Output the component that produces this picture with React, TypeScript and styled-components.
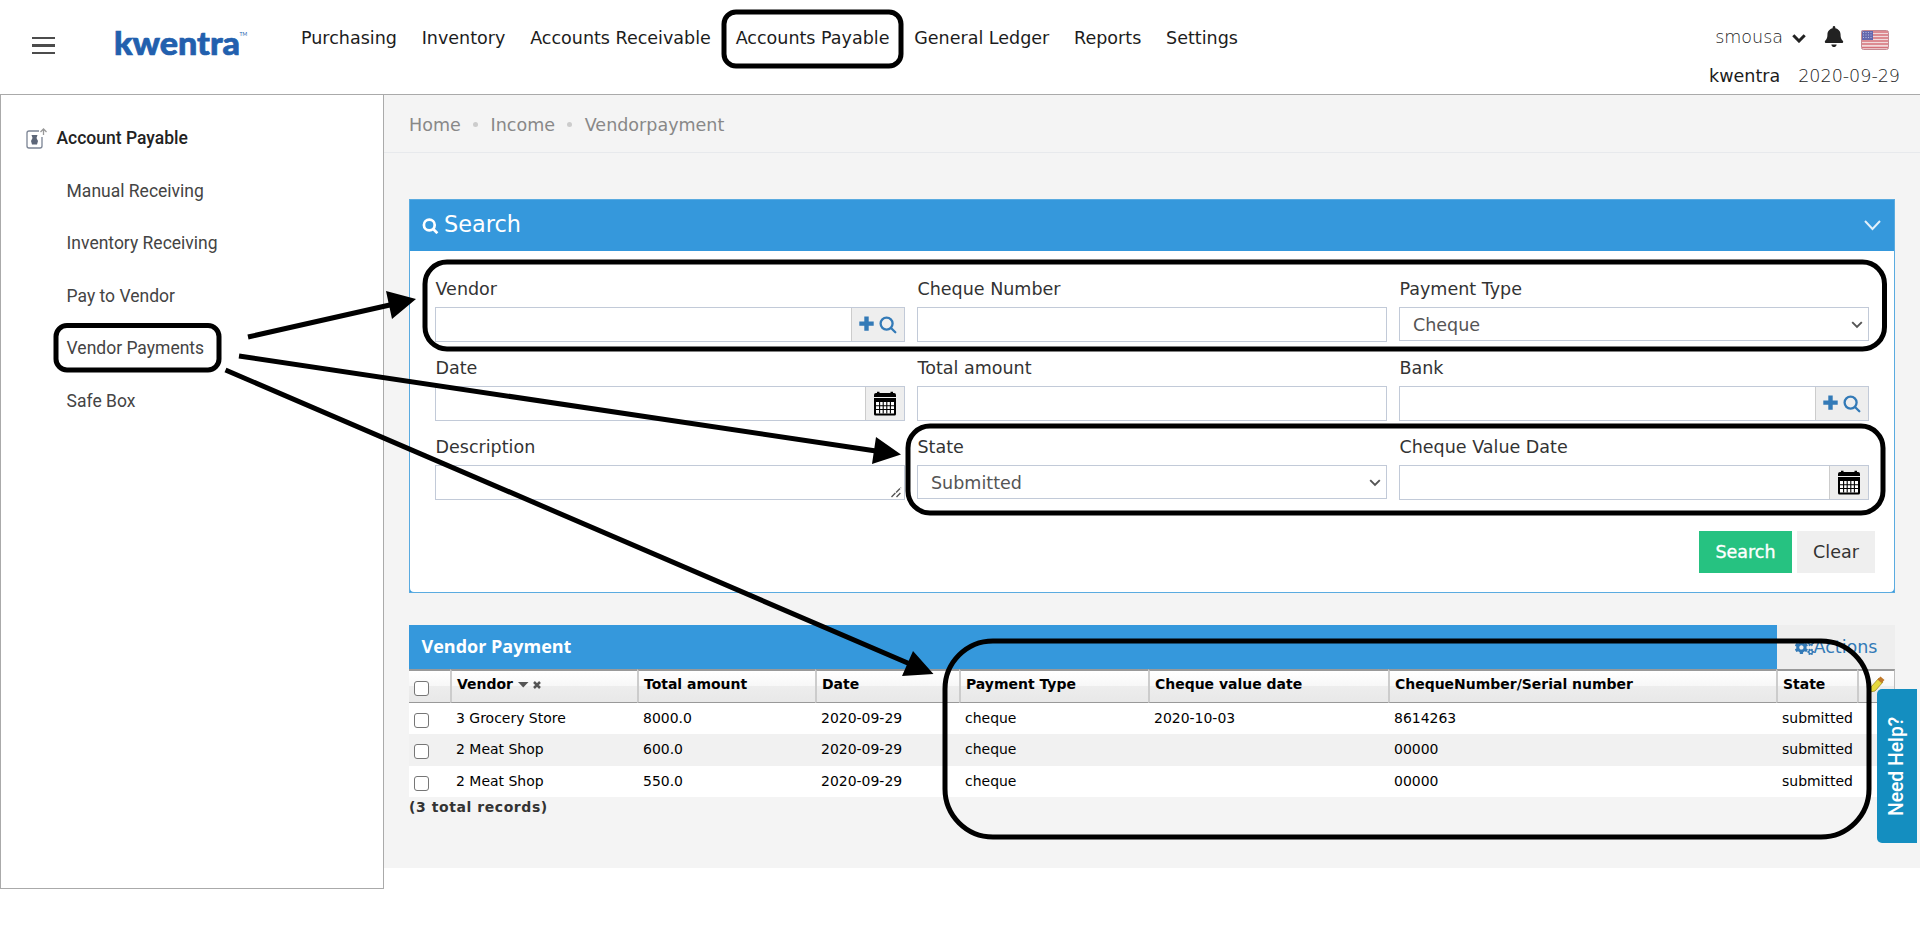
import React from "react";
import styled, { createGlobalStyle } from "styled-components";
import { FaBell, FaCogs } from "react-icons/fa";

const Global = createGlobalStyle`
  * { box-sizing: border-box; }
  body { margin: 0; background: #fff; overflow: hidden; font-family: "DejaVu Sans", Verdana, sans-serif; font-size: 17.53px; color: #333; }
`;

const Page = styled.div`
  position: relative;
  width: 1920px;
  height: 943px;
  background: #fff;
`;

const Header = styled.header`
  display: flex;
  height: 95px;
  border-bottom: 1px solid #aaa;
  color: #1c1c1c;
`;

const MenuButton = styled.div`
  display: flex;
  flex-direction: column;
  justify-content: space-between;
  width: 23px;
  height: 17px;
  margin: 37px 0 0 32px;
`;

const MenuBar = styled.span<{ $h?: number }>`
  height: ${(p) => p.$h ?? 2}px;
  background: #4c4c4c;
`;

const Logo = styled.svg`
  width: 140px;
  height: 44px;
  margin: 20px 0 0 55px;
  overflow: visible;
`;

const Nav = styled.nav`
  display: flex;
  gap: 24.8px;
  margin: 27px 0 0 51px;
  line-height: 22px;
  white-space: nowrap;
`;

const Account = styled.div`
  margin: 26px 20px 0 auto;
`;

const AccountRow = styled.div<{ $top?: number; $right?: number; $gap?: number }>`
  display: flex;
  justify-content: flex-end;
  align-items: center;
  height: 22px;
  margin: ${(p) => p.$top ?? 0}px ${(p) => p.$right ?? 0}px 0 0;
  gap: ${(p) => p.$gap ?? 0}px;
`;

const Thin = styled.span`
  font-weight: 200;
`;

const UserName = styled(Thin)`
  margin-right: 9px;
`;

const Chevron = styled.svg`
  width: 14px;
  height: 9px;
  margin: 3px 18px 0 0;
`;

const Bell = styled(FaBell)`
  width: 20px;
  height: 21px;
  margin: 0 17px 2px 0;
  color: #222;
`;

const Flag = styled.svg`
  width: 28px;
  height: 20px;
  margin-top: 5px;
`;

const Body = styled.div`
  display: flex;
  align-items: flex-start;
`;

const Sidebar = styled.aside`
  width: 384px;
  height: 794px;
  border: 1px solid #aaa;
  border-top: 0;
  padding-top: 30px;
  font-family: Roboto, sans-serif;
  font-size: 17.5px;
`;

const SideTitle = styled.div`
  display: flex;
  align-items: center;
  height: 26px;
  padding-left: 24px;
  font-weight: 500;
  color: #222;
`;

const LedgerIcon = styled.svg`
  width: 22px;
  height: 22px;
  margin-right: 9.5px;
`;

const SideList = styled.ul`
  list-style: none;
  margin: 15px 0 0;
  padding: 0 0 0 65.6px;
  color: #444;
`;

const SideItem = styled.li`
  height: 52.4px;
  line-height: 51.6px;
`;

const Main = styled.main`
  width: 1536px;
  height: 773px;
  background: #f4f4f4;
`;

const Breadcrumb = styled.div`
  display: flex;
  align-items: center;
  gap: 12.4px;
  height: 58px;
  padding: 2px 0 0 25px;
  border-bottom: 1px solid #e7e9ec;
  color: #888;
`;

const Dot = styled.span`
  width: 5px;
  height: 5px;
  border-radius: 50%;
  background: #ccc;
`;

const Panel = styled.section`
  width: 1486px;
  height: 394px;
  margin: 46px 0 0 25px;
  background: #3598dc;
  border: 1px solid #5aabe0;
`;

const PanelHead = styled.div`
  display: flex;
  align-items: center;
  height: 52px;
  margin: -1px 0 0;
  padding: 0 13px 0 12px;
  color: #fff;
  font-size: 22.4px;
`;

const PanelTitle = styled.span`
  flex: 1;
  margin-left: 5px;
  padding-bottom: 3px;
`;

const PanelBody = styled.div`
  height: 341px;
  background: #fff;
  border-radius: 0 0 4px 4px;
`;

const Form = styled.div`
  display: grid;
  grid-template-columns: repeat(3, 470px);
  grid-auto-rows: 79px;
  column-gap: 12px;
  padding: 26px 0 0 25px;
`;

const Field = styled.div`
  display: flex;
  flex-direction: column;
`;

const Label = styled.label`
  height: 30px;
  padding-left: 0.5px;
  line-height: 24px;
  color: #333;
`;

const Control = styled.div<{ $h?: number }>`
  display: flex;
  height: ${(p) => p.$h ?? 35}px;
  border: 1px solid #c2cad8;
  background: #fff;
  color: #555;
`;

const Value = styled.span`
  flex: 1;
  padding-left: 13px;
  line-height: 34px;
`;

const Addon = styled.span<{ $w: number }>`
  display: flex;
  align-items: center;
  justify-content: center;
  gap: 5px;
  width: ${(p) => p.$w}px;
  border-left: 1px solid #ccc;
  background: #eee;
  color: #337ab7;
`;

const SelectArrow = styled.svg`
  width: 12px;
  height: 8px;
  margin: 13px 5px 0 0;
`;

const Grip = styled.svg`
  width: 12px;
  height: 12px;
  margin: 20px 2px 0 auto;
`;

const Buttons = styled.div`
  display: flex;
  justify-content: flex-end;
  gap: 5px;
  margin: 17px 19px 0 0;
`;

const Button = styled.button<{ $main?: boolean }>`
  width: ${(p) => (p.$main ? 93 : 78)}px;
  height: 42px;
  padding: 0;
  border: 0;
  font: inherit;
  background: ${(p) => (p.$main ? "#26c281" : "#efefef")};
  color: ${(p) => (p.$main ? "#fff" : "#333")};
  -webkit-text-stroke: ${(p) => (p.$main ? "0.35px #fff" : "0")};
`;

const Grid = styled.section`
  width: 1486px;
  margin: 32px 0 0 25px;
`;

const GridTop = styled.div`
  display: flex;
  height: 44px;
`;

const GridTitle = styled.div`
  width: 1368px;
  padding-left: 12.5px;
  background: #3598dc;
  color: #fff;
  font: bold 18px/43px "Open Sans", sans-serif;
`;

const Actions = styled.div`
  display: flex;
  flex: 1;
  align-items: center;
  justify-content: center;
  background: #eee;
  color: #337ab7;
`;

const Table = styled.table`
  width: 1486px;
  table-layout: fixed;
  border-collapse: separate;
  border-spacing: 0;
  font-size: 13.97px;
  color: #000;
`;

const Th = styled.th<{ $w: number }>`
  width: ${(p) => p.$w}px;
  height: 34px;
  padding: 0 0 0 5px;
  text-align: left;
  vertical-align: top;
  line-height: 27px;
  white-space: nowrap;
  border-top: 2px solid #999;
  border-bottom: 1px solid #999;
  border-left: 2px solid #ccc;
  background: linear-gradient(#fff 0, #f7f7f7 50%, #ededed 50%, #e8e8e8 100%);
  &:first-child { border-left: 0; }
  &:last-child { border-right: 1px solid #bbb; }
`;

const Td = styled.td`
  padding: 0 0 0 6px;
  line-height: 30px;
  vertical-align: top;
`;

const Row = styled.tr<{ $alt?: boolean }>`
  height: ${(p) => (p.$alt ? 32 : 31)}px;
  background: ${(p) => (p.$alt ? "#f1f1f1" : "#fff")};
`;

const Check = styled.span<{ $top?: number; $left?: number }>`
  display: block;
  width: 15px;
  height: 15px;
  margin-top: ${(p) => p.$top ?? 10}px;
  margin-left: ${(p) => p.$left ?? -1}px;
  border: 1.5px solid #767676;
  border-radius: 3px;
  background: #fff;
`;

const SortIcons = styled.svg`
  width: 24px;
  height: 8px;
  margin-left: 5px;
`;

const Pencil = styled.svg`
  display: block;
  width: 16px;
  height: 18px;
  margin: 5px 0 0 5px;
`;

const Total = styled.div`
  font-weight: bold;
  font-size: 14px;
  line-height: 20px;
  letter-spacing: 0.57px;
`;

const Help = styled.div`
  position: absolute;
  left: 1877px;
  top: 689px;
  width: 40px;
  height: 154px;
  border-radius: 0 5px 5px 0;
  background: #148ec0;
  color: #fff;
  font: 500 19.3px/40px Roboto, sans-serif;
  text-align: center;
  writing-mode: vertical-rl;
  transform: rotate(180deg);
`;

const Markup = styled.svg`
  position: absolute;
  left: 0;
  top: 0;
  width: 1920px;
  height: 943px;
  pointer-events: none;
`;

const Lens = ({ size, color, weight }: { size: number; color: string; weight: number }) => (
  <svg width={size} height={size} viewBox="0 0 18 18" fill="none" stroke={color} strokeWidth={weight}>
    <circle cx="7.6" cy="7.6" r="6" />
    <path d="M12 12l4.3 4.3" strokeLinecap="round" />
  </svg>
);

const Plus = () => (
  <svg width="15" height="18" viewBox="0 0 15 18">
    <path d="M5.300 0.500h4.400v5h5v4.200h-5v5H5.300v-5h-5V5.500h5z" fill="#337ab7" />
  </svg>
);

const Calendar = () => (
  <svg width="24" height="25" viewBox="0 0 24 25">
    <path d="M1 4q0-2 2-2h1V0.800h2.500V2h11V0.800H20V2h1q2 0 2 2v2H1zM1 7h22v16q0 1.500-1.500 1.500h-19Q1 24.500 1 23z" fill="#000" />
    <path d="M3 11h18v11.500H3z" fill="#fff" />
    <path d="M3 14.700h18M3 18.500h18M6.600 11v11.500M10.200 11v11.500M13.800 11v11.500M17.400 11v11.500" stroke="#000" strokeWidth="1.100" />
  </svg>
);

type FieldKind = "text" | "lookup" | "date" | "select" | "area";
const fields: { label: string; kind: FieldKind; value?: string }[] = [
  { label: "Vendor", kind: "lookup" },
  { label: "Cheque Number", kind: "text" },
  { label: "Payment Type", kind: "select", value: "Cheque" },
  { label: "Date", kind: "date" },
  { label: "Total amount", kind: "text" },
  { label: "Bank", kind: "lookup" },
  { label: "Description", kind: "area" },
  { label: "State", kind: "select", value: "Submitted" },
  { label: "Cheque Value Date", kind: "date" },
];

const FormField = ({ label, kind, value }: (typeof fields)[number]) => (
  <Field>
    <Label>{label}</Label>
    <Control $h={kind === "select" ? 34 : 35}>
      <Value>{value}</Value>
      {kind === "lookup" && (
        <Addon $w={53}>
          <Plus />
          <Lens size={18} color="#337ab7" weight={2.3} />
        </Addon>
      )}
      {kind === "date" && (
        <Addon $w={39}>
          <Calendar />
        </Addon>
      )}
      {kind === "select" && (
        <SelectArrow viewBox="0 0 12 8">
          <path d="M1.200 1.200L6 6l4.800-4.800" fill="none" stroke="#555" strokeWidth="1.900" />
        </SelectArrow>
      )}
      {kind === "area" && (
        <Grip viewBox="0 0 12 12">
          <path d="M1.500 11L11 1.500M6.500 11L11 6.500" stroke="#555" strokeWidth="1.400" strokeDasharray="5.500 1" />
        </Grip>
      )}
    </Control>
  </Field>
);

const records = [
  ["3 Grocery Store", "8000.0", "2020-09-29", "cheque", "2020-10-03", "8614263", "submitted"],
  ["2 Meat Shop", "600.0", "2020-09-29", "cheque", "", "00000", "submitted"],
  ["2 Meat Shop", "550.0", "2020-09-29", "cheque", "", "00000", "submitted"],
];

const navItems = ["Purchasing", "Inventory", "Accounts Receivable", "Accounts Payable", "General Ledger", "Reports", "Settings"];
const sideItems = ["Manual Receiving", "Inventory Receiving", "Pay to Vendor", "Vendor Payments", "Safe Box"];

export default function App() {
  return (
    <Page>
      <Global />
      <Header>
        <MenuButton>
          <MenuBar />
          <MenuBar $h={3} />
          <MenuBar />
        </MenuButton>
        <Logo viewBox="0 0 140 44">
          <text x="4" y="34.500" fontFamily="Lato, sans-serif" fontWeight="900" fontSize="32" fill="#2260ae" stroke="#2260ae" strokeWidth="0.700" textLength="126" lengthAdjust="spacingAndGlyphs">kwentra</text>
          <text x="129.500" y="16" fontFamily="Lato, sans-serif" fontSize="5" fill="#2260ae">TM</text>
        </Logo>
        <Nav>
          {navItems.map((t) => (
            <span key={t}>{t}</span>
          ))}
        </Nav>
        <Account>
          <AccountRow $right={11}>
            <UserName>smousa</UserName>
            <Chevron viewBox="0 0 14 9">
              <path d="M1.300 1.300L7 7l5.700-5.700" fill="none" stroke="#222" strokeWidth="3" />
            </Chevron>
            <Bell />
            <Flag viewBox="0 0 28 20">
              <rect x="0.500" y="0.500" width="27" height="19" rx="2" fill="#f1dadb" />
              <path d="M1 2h26M1 5h26M1 8h26M1 11h26M1 14h26M1 17.500h26" stroke="#d5717a" strokeWidth="1.500" />
              <rect x="0.500" y="0.500" width="11.500" height="9.500" fill="#6468ae" />
              <path d="M2 2.500h9M2 5h9M2 7.500h9" stroke="#b8bce0" strokeDasharray="1 1.500" />
              <rect x="0.500" y="0.500" width="27" height="19" rx="2" fill="none" stroke="#c58a92" />
            </Flag>
          </AccountRow>
          <AccountRow $top={17} $gap={18}>
            <span>kwentra</span>
            <Thin>2020-09-29</Thin>
          </AccountRow>
        </Account>
      </Header>
      <Body>
        <Sidebar>
          <SideTitle>
            <LedgerIcon viewBox="0 0 22 22" fill="none" stroke="#7b8494" strokeWidth="1.300">
              <path d="M14 4H4Q2 4 2 6v13q0 2 2 2h11q2 0 2-2v-9" />
              <path d="M18.500 8V2.500M15.500 5l3-3 3 3" stroke="#999" />
              <path d="M6.500 8h6l-1 3 1.500 3-1 3.500h-5l-1-3.500 1.500-3z" fill="#5c6678" stroke="none" />
            </LedgerIcon>
            Account Payable
          </SideTitle>
          <SideList>
            {sideItems.map((t) => (
              <SideItem key={t}>{t}</SideItem>
            ))}
          </SideList>
        </Sidebar>
        <Main>
          <Breadcrumb>
            <span>Home</span>
            <Dot />
            <span>Income</span>
            <Dot />
            <span>Vendorpayment</span>
          </Breadcrumb>
          <Panel>
            <PanelHead>
              <svg width="17" height="18" viewBox="0 0 17 18" fill="none" stroke="#fff" strokeWidth="2.700">
                <circle cx="7.300" cy="9" r="5.400" />
                <path d="M11.200 13l4.200 4.200" />
              </svg>
              <PanelTitle>Search</PanelTitle>
              <svg width="17" height="11" viewBox="0 0 17 11" fill="none" stroke="#e2f0fa" strokeWidth="2">
                <path d="M1 1l7.500 8L16 1" />
              </svg>
            </PanelHead>
            <PanelBody>
              <Form>
                {fields.map((f) => (
                  <FormField key={f.label} {...f} />
                ))}
              </Form>
              <Buttons>
                <Button $main>Search</Button>
                <Button>Clear</Button>
              </Buttons>
            </PanelBody>
          </Panel>
          <Grid>
            <GridTop>
              <GridTitle>Vendor Payment</GridTitle>
              <Actions>
                <FaCogs size={19} />
                Actions
              </Actions>
            </GridTop>
            <Table>
              <thead>
                <tr>
                  <Th $w={41}><Check $top={10} $left={0} /></Th>
                  <Th $w={187}>
                    Vendor
                    <SortIcons viewBox="0 0 24 8">
                      <path d="M0 1h10.500L5.250 6.500z" fill="#555" />
                      <path d="M16 1l6 6M22 1l-6 6" stroke="#555" strokeWidth="2.500" />
                    </SortIcons>
                  </Th>
                  <Th $w={178}>Total amount</Th>
                  <Th $w={144}>Date</Th>
                  <Th $w={189}>Payment Type</Th>
                  <Th $w={240}>Cheque value date</Th>
                  <Th $w={388}>ChequeNumber/Serial number</Th>
                  <Th $w={81}>State</Th>
                  <Th $w={38}>
                    <Pencil viewBox="0 0 16 18">
                      <path d="M2 11l8-9 4 4-8 9-5 1z" fill="#e6d83c" stroke="#a08a20" strokeWidth="0.800" />
                      <path d="M8.500 3.500L11.500 0.500l4 3.500-3 3z" fill="#c07828" />
                    </Pencil>
                  </Th>
                </tr>
              </thead>
              <tbody>
                {records.map((r, i) => (
                  <Row key={i} $alt={i === 1}>
                    <Td><Check /></Td>
                    {r.map((c, j) => (
                      <Td key={j}>{c}</Td>
                    ))}
                    <Td />
                  </Row>
                ))}
              </tbody>
            </Table>
            <Total>(3 total records)</Total>
          </Grid>
        </Main>
      </Body>
      <Help>Need Help?</Help>
      <Markup viewBox="0 0 1920 943" fill="none" stroke="#000" strokeWidth="5">
        <rect x="724" y="12" width="177" height="54" rx="12" />
        <rect x="56" y="325.500" width="163" height="44.500" rx="11" />
        <rect x="425" y="262" width="1459.500" height="87" rx="22" />
        <rect x="908" y="426" width="975" height="87" rx="22" />
        <rect x="945" y="641" width="924" height="196" rx="48" />
        <path d="M248 337L392 304.500M239 356L876 451M225.500 370L910 664" />
        <path d="M416 299l-30-8 6 28zM901 454.500L876 437l-4 27zM933.500 674L913 651l-11 25z" fill="#000" stroke="none" />
      </Markup>
    </Page>
  );
}
